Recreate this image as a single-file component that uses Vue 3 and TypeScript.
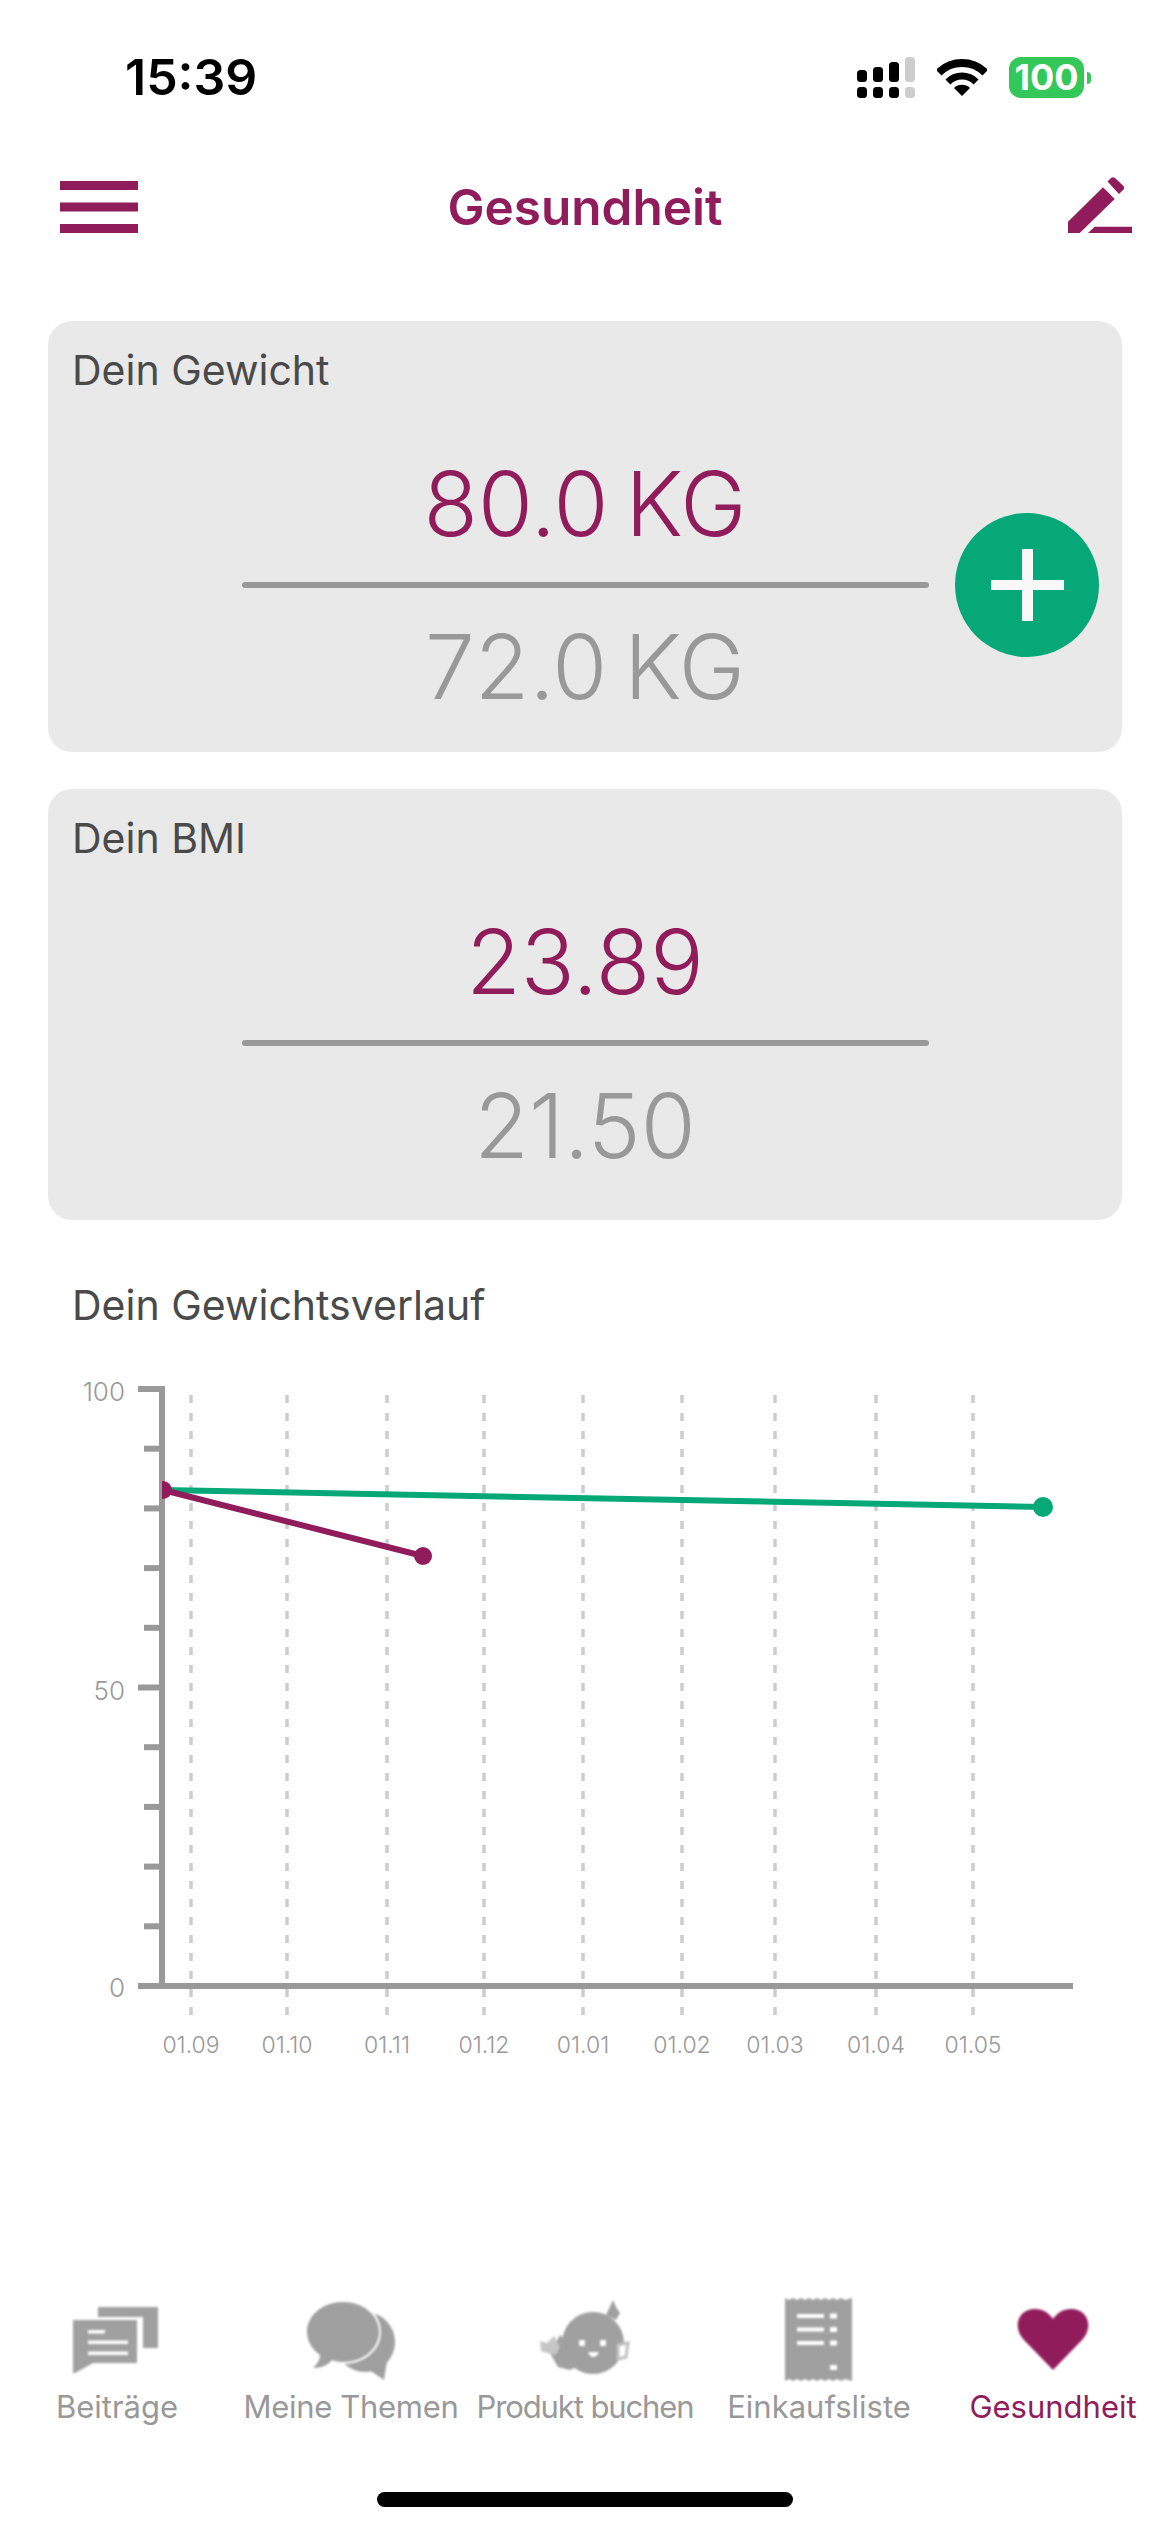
<script setup lang="ts">
const card1 = { title: 'Dein Gewicht', current: '80.0 KG', target: '72.0 KG' }
const card2 = { title: 'Dein BMI', current: '23.89', target: '21.50' }

// chart coordinates are page pixels, see viewBox
const axisTop = 1389
const axisBottom = 1986
const ticks = Array.from({ length: 11 }, (_, i) => ({
  y: axisTop + (i * (axisBottom - axisTop)) / 10,
  major: i % 5 === 0,
}))
const yLabels = [
  { text: '100', y: 1401 },
  { text: '50', y: 1700 },
  { text: '0', y: 1997 },
]
const months = [
  { text: '01.09', x: 191 },
  { text: '01.10', x: 287 },
  { text: '01.11', x: 387 },
  { text: '01.12', x: 484 },
  { text: '01.01', x: 583 },
  { text: '01.02', x: 682 },
  { text: '01.03', x: 775 },
  { text: '01.04', x: 876 },
  { text: '01.05', x: 973 },
]
</script>

<template>
  <div class="page">
    <div class="status">
      <span class="time">15:39</span>
      <div class="status-icons">
        <svg width="58" height="41" viewBox="0 0 58 41">
          <rect x="0" y="13" width="10" height="12" rx="3.5" />
          <rect x="16" y="10" width="10" height="15" rx="3.5" />
          <rect x="32" y="5" width="10" height="20" rx="3.5" />
          <rect x="48" y="0" width="10" height="25" rx="3.5" fill="#cdcdcd" />
          <rect x="0" y="30" width="10" height="11" rx="3.5" />
          <rect x="16" y="30" width="10" height="11" rx="3.5" />
          <rect x="32" y="30" width="10" height="11" rx="3.5" />
          <rect x="48" y="30" width="10" height="11" rx="3.5" fill="#cdcdcd" />
        </svg>
        <svg class="wifi" width="50" height="37" viewBox="0 0 50 37" fill="none" stroke="#000">
          <path d="M1.7 13.7A33 33 0 0 1 48.3 13.7" stroke-width="8" />
          <path d="M10.9 22.9A20 20 0 0 1 39.1 22.9" stroke-width="7" />
          <path d="M25 37L17 29A11.3 11.3 0 0 1 33 29Z" fill="#000" stroke="none" />
        </svg>
        <div class="battery">
          <span class="battery-body">100</span>
          <span class="battery-nub"></span>
        </div>
      </div>
    </div>

    <header class="topbar">
      <svg class="menu" width="78" height="52" viewBox="0 0 78 52" fill="#911c5b">
        <rect x="0" y="0" width="78" height="9" />
        <rect x="0" y="21.5" width="78" height="9" />
        <rect x="0" y="43" width="78" height="9" />
      </svg>
      <h1 class="topbar-title">Gesundheit</h1>
      <svg class="pen" width="64" height="57" viewBox="0 0 64 57" fill="#911c5b">
        <path d="M0 45.7L35 11.3L46.7 23L11.7 57H0Z" />
        <path d="M39.5 5.5L43 2Q45 .5 47 2L55.5 10Q57 12 55.5 13.5L51 18Z" />
        <path d="M20 57L26.7 50.7H64V57Z" />
      </svg>
    </header>

    <main class="content">
      <section class="card">
        <h2 class="card-title">{{ card1.title }}</h2>
        <div class="value">{{ card1.current }}</div>
        <div class="divider"></div>
        <div class="value target">{{ card1.target }}</div>
        <button class="add">
          <svg width="73" height="72" viewBox="0 0 73 72" fill="#f8f8f8">
            <rect x="31" y="0" width="11" height="72" />
            <rect x="0" y="31" width="73" height="10" />
          </svg>
        </button>
      </section>

      <section class="card compact">
        <h2 class="card-title">{{ card2.title }}</h2>
        <div class="value">{{ card2.current }}</div>
        <div class="divider"></div>
        <div class="value target">{{ card2.target }}</div>
      </section>

      <h2 class="chart-title">Dein Gewichtsverlauf</h2>
      <svg class="chart" width="1074" height="720" viewBox="48 1340 1074 720">
        <defs>
          <clipPath id="plot"><rect x="162" y="1340" width="960" height="720" /></clipPath>
        </defs>

        <line
          v-for="m in months"
          :key="m.text + m.x"
          :x1="m.x"
          :x2="m.x"
          y1="1395"
          y2="2016"
          stroke="#cccccc"
          stroke-width="3.5"
          stroke-dasharray="8 10"
        />

        <rect x="159" :y="axisTop - 3" width="6" :height="axisBottom - axisTop + 3" fill="#999" />
        <rect x="138" :y="axisBottom - 3" width="935" height="6" fill="#999" />
        <rect
          v-for="t in ticks"
          :key="t.y"
          :x="t.major ? 138 : 144"
          :y="t.y - 3"
          :width="t.major ? 22 : 16"
          height="6"
          fill="#999"
        />

        <text v-for="l in yLabels" :key="l.text" x="125" :y="l.y" text-anchor="end" class="axis-y">{{ l.text }}</text>
        <text v-for="m in months" :key="m.x" :x="m.x" y="2053" text-anchor="middle" class="axis-x">{{ m.text }}</text>

        <g clip-path="url(#plot)">
          <line x1="163" y1="1490" x2="1043" y2="1507" stroke="#06a878" stroke-width="6" />
          <circle cx="1043" cy="1507" r="10" fill="#06a878" />
          <line x1="163" y1="1490" x2="423" y2="1556" stroke="#911c5b" stroke-width="6" />
          <circle cx="163" cy="1490" r="9" fill="#911c5b" />
          <circle cx="423" cy="1556" r="9" fill="#911c5b" />
        </g>
      </svg>
    </main>

    <nav class="tabs">
      <div class="tab">
        <svg class="tab-icon" width="110" height="90" viewBox="2 0 110 90" fill="#a0a0a0">
          <path d="M38 12H98V53H83V22H38Z" />
          <path d="M13 25H77V68H33L15 78H13Z" />
          <g fill="#fff">
            <rect x="28" y="35" width="17" height="3.5" />
            <rect x="28" y="45.5" width="40" height="3.5" />
            <rect x="28" y="56.5" width="40" height="3.5" />
          </g>
        </svg>
        <span>Beiträge</span>
      </div>
      <div class="tab tight">
        <svg class="tab-icon" width="110" height="90" viewBox="0 0 110 90" fill="#a0a0a0">
          <circle cx="69" cy="47" r="30" />
          <path d="M52 65L92 60L88 85L72 74Z" />
          <g stroke="#fff" stroke-width="4" paint-order="stroke">
            <path d="M47 7C67 7 83 20 83 37C83 54 67 67 47 67C43 67 39 66 36 65C32 70 26 73 17 73C21 69 24 65 24 60C16 54 11 46 11 37C11 20 27 7 47 7Z" />
          </g>
        </svg>
        <span>Meine Themen</span>
      </div>
      <div class="tab tighter">
        <svg class="tab-icon" width="110" height="90" viewBox="0 0 110 90" fill="#a0a0a0">
          <path d="M76 20L83 5L86 12L90 18L86 25Z" />
          <path d="M20 58L30 40L36 46L45 30L50 70L40 75L28 72Z" />
          <path d="M10 46L17 48L24 41L30 52L26 60L17 58L11 56Z" fill="#c6c6c6" />
          <circle cx="63" cy="48" r="31" />
          <path d="M88 50L98 48L96 62L88 64Z" fill="#fff" stroke="#c0c0c0" stroke-width="3" />
          <g fill="#fff">
            <rect x="49" y="45" width="6" height="6" rx="1" />
            <rect x="70" y="45" width="6" height="6" rx="1" />
            <path d="M58 57H69Q67 62 63 62Q60 62 58 57Z" />
          </g>
        </svg>
        <span>Produkt buchen</span>
      </div>
      <div class="tab">
        <svg class="tab-icon" width="110" height="90" viewBox="0 0 110 90" fill="#a0a0a0">
          <path d="M21 3L25 5L29 3L33 5L37 3L41 5L45 3L49 5L53 3L57 5L61 3L65 5L69 3L73 5L77 3L81 5L88 3V86L81 84L77 86L73 84L69 86L65 84L61 86L57 84L53 86L49 84L45 86L41 84L37 86L33 84L29 86L25 84L21 86Z" />
          <g fill="#fff">
            <rect x="33" y="19" width="27" height="4" />
            <rect x="33" y="32.500" width="27" height="4" />
            <rect x="33" y="46" width="27" height="4" />
            <rect x="66" y="18.500" width="7" height="5" />
            <rect x="66" y="32" width="7" height="5" />
            <rect x="66" y="45.500" width="7" height="5" />
            <rect x="66" y="70" width="7" height="5" />
          </g>
        </svg>
        <span>Einkaufsliste</span>
      </div>
      <div class="tab active">
        <svg class="tab-icon" width="110" height="90" viewBox="0 0 110 90" fill="#911c5b">
          <path d="M55 75L26 45C14 32 20 14 37 14C45 14 51 18 55 24C59 18 65 14 73 14C90 14 96 32 84 45Z" />
        </svg>
        <span>Gesundheit</span>
      </div>
    </nav>
    <div class="home-bar"></div>
  </div>
</template>

<style scoped>
.page {
  width: 1170px;
  height: 2532px;
  display: flex;
  flex-direction: column;
  font-family: Inter, 'Noto Sans', sans-serif;
  background: #fff;
  overflow: hidden;
}

.status {
  height: 120px;
  box-sizing: border-box;
  padding: 57px 79px 0 125px;
  display: flex;
  justify-content: space-between;
  align-items: flex-start;
}

.time {
  font-size: 50px;
  line-height: 41px;
  font-weight: 600;
  color: #000;
}

.status-icons {
  display: flex;
  align-items: flex-start;
  gap: 22px;
}

.wifi {
  margin-top: 2px;
}

.battery {
  display: flex;
  align-items: center;
  gap: 3px;
}

.battery-body {
  width: 75px;
  height: 41px;
  border-radius: 12px;
  background: #34c759;
  color: #fff;
  font-size: 36px;
  font-weight: 700;
  line-height: 41px;
  text-align: center;
}

.battery-nub {
  width: 4px;
  height: 12px;
  border-radius: 0 6px 6px 0;
  background: #34c759;
}

.topbar {
  height: 174px;
  padding: 0 38px;
  display: grid;
  grid-template-columns: 1fr auto 1fr;
  align-items: center;
}

.menu {
  justify-self: start;
  margin-left: 22px;
}

.pen {
  justify-self: end;
  margin-top: -5px;
}

.topbar-title {
  margin: 0;
  font-size: 49.5px;
  font-weight: 600;
  color: #911c5b;
}

.content {
  padding: 27px 48px 0;
  display: flex;
  flex-direction: column;
  gap: 37px;
}

.card {
  position: relative;
  height: 431px;
  box-sizing: border-box;
  padding: 24px 24px 0;
  border-radius: 24px;
  background: #e9e9e9;
  display: flex;
  flex-direction: column;
  align-items: center;
}

.card-title,
.chart-title {
  margin: 0;
  font-size: 41px;
  line-height: 50px;
  font-weight: 400;
  color: #4a4a4a;
  align-self: flex-start;
}

.value {
  margin-top: 54px;
  font-size: 89px;
  line-height: 110px;
  font-weight: 350;
  word-spacing: -8px;
  color: #911c5b;
}

.compact .value {
  margin-top: 44px;
}

.value.target {
  margin-top: 24px;
  color: #999;
}

.compact .value.target {
  margin-top: 25px;
}

.divider {
  width: 687px;
  height: 6px;
  margin-top: 23px;
  border-radius: 3px;
  background: #999;
}

.add {
  position: absolute;
  left: 907px;
  top: 192px;
  width: 144px;
  height: 144px;
  padding: 0;
  border: none;
  border-radius: 50%;
  background: #06a878;
  display: flex;
  align-items: center;
  justify-content: center;
}

.chart-title {
  margin: 23px 0 0 24px;
}

.chart {
  display: block;
  margin-top: -27px;
}

.axis-y {
  font-size: 26px;
  font-weight: 300;
  fill: #999;
}

.axis-x {
  font-size: 23px;
  font-weight: 300;
  fill: #999;
}

.tabs {
  margin-top: auto;
  display: grid;
  grid-template-columns: repeat(5, 234px);
}

.tab {
  display: flex;
  flex-direction: column;
  align-items: center;
  font-size: 31px;
  line-height: 42px;
  color: #999;
  white-space: nowrap;
}

.tab span {
  margin-top: 1px;
}

.tab.tight {
  letter-spacing: -0.3px;
}

.tab.tighter {
  letter-spacing: -1.1px;
}

.tab.active {
  color: #911c5b;
}

.tab-icon {
  display: block;
  filter: blur(1px);
}

.home-bar {
  width: 416px;
  height: 15px;
  margin: 64px auto 25px;
  border-radius: 8px;
  background: #000;
}
</style>

<style>
html,
body {
  margin: 0;
  background: #fff;
}
</style>
